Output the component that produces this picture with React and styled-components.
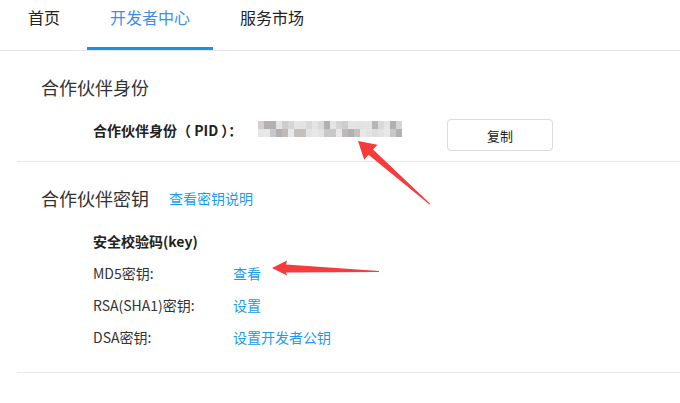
import React from "react";
import styled, { createGlobalStyle } from "styled-components";

const Global = createGlobalStyle`
  html, body { margin: 0; padding: 0; background: #fff; }
  body {
    font-family: "Noto Sans CJK SC", "Microsoft YaHei", "Liberation Sans", sans-serif;
    color: #333;
  }
`;

const Page = styled.div`
  position: relative;
  width: 680px;
  height: 403px;
  overflow: hidden;
  background: #fff;
`;

const Nav = styled.div`
  display: flex;
  gap: 4px;
  height: 50px;
  padding-left: 5px;
  border-bottom: 1px solid #e6e6e6;
`;

const Tab = styled.div`
  box-sizing: border-box;
  height: 50px;
  padding: 6px 23px 0;
  font-size: 16px;
  line-height: 22px;
  color: ${(p) => (p.$active ? "#3d8fe3" : "#222")};
  border-bottom: 3px solid ${(p) => (p.$active ? "#1e8fe6" : "transparent")};
`;

const Main = styled.div`
  padding-left: 17px;
`;

const Section = styled.section`
  padding: 24px 0 ${(p) => p.$pb}px 24px;
  border-bottom: 1px solid #e8e8e8;
`;

const TitleRow = styled.div`
  display: flex;
  align-items: center;
  gap: 20px;
  height: 24px;
`;

const Title = styled.h2`
  margin: 0;
  font-size: 18px;
  font-weight: normal;
  line-height: 24px;
  color: #333;
`;

const Link = styled.a`
  font-size: 14px;
  line-height: 20px;
  color: #1a9de8;
  text-decoration: none;
  cursor: pointer;
`;

const PidRow = styled.div`
  display: flex;
  align-items: flex-start;
  margin-top: 20px;
  padding-left: 52px;
`;

const PidLabel = styled.span`
  width: 165px;
  font-size: 14px;
  font-weight: bold;
  line-height: 22px;
  color: #222;
  white-space: pre;
`;

const Mosaic = styled.svg`
  display: block;
  margin-top: 2px;
  width: 144px;
  height: 16px;
`;

const CopyButton = styled.button`
  box-sizing: border-box;
  margin-left: 45px;
  width: 106px;
  height: 32px;
  border: 1px solid #dcdcdc;
  border-radius: 4px;
  background: #fff;
  font-family: inherit;
  font-size: 13px;
  color: #222;
  cursor: pointer;
`;

const KeyList = styled.div`
  display: flex;
  flex-direction: column;
  gap: 12px;
  margin-top: 21px;
  padding-left: 52px;
`;

const KeyRow = styled.div`
  display: flex;
  align-items: center;
  height: 20px;
  font-size: 14px;
  line-height: 20px;
`;

const SubHead = styled.div`
  font-size: 14px;
  font-weight: bold;
  line-height: 20px;
  color: #222;
`;

const KeyLabel = styled.span`
  width: 140px;
  color: #333;
`;

const Overlay = styled.svg`
  position: absolute;
  left: 0;
  top: 0;
  width: 680px;
  height: 403px;
  pointer-events: none;
`;

const palette = ["#d9d9d9", "#c8c8ca", "#bdbab8", "#e3e3e3", "#b6b6ba", "#d3d6d8", "#c4c0be", "#dedddb", "#b2b0b1", "#cfccc9"];

function PidMosaic() {
  const cells = [];
  for (let r = 0; r < 2; r++) {
    for (let c = 0; c < 24; c++) {
      const idx = (c * 7 + r * 3 + ((c * c) % 5)) % palette.length;
      let col = palette[idx];
      if (r === 0 && c % 3 === 0) col = "#e4e4e4";
      if (r === 1 && c % 4 === 1) col = "#e8e8e8";
      if (c === 0) col = r === 0 ? "#d2cfcd" : "#e6e6e6";
      cells.push(<rect key={r + "-" + c} x={c * 6} y={r * 8} width={6} height={8} fill={col} />);
    }
  }
  return (
    <Mosaic viewBox="0 0 144 16" aria-label="PID">
      {cells}
    </Mosaic>
  );
}

export default function App() {
  return (
    <Page>
      <Global />
      <Nav>
        <Tab>首页</Tab>
        <Tab $active>开发者中心</Tab>
        <Tab>服务市场</Tab>
      </Nav>
      <Main>
        <Section $pb={10}>
          <TitleRow>
            <Title>合作伙伴身份</Title>
          </TitleRow>
          <PidRow>
            <PidLabel>合作伙伴身份（ PID ）：</PidLabel>
            <PidMosaic />
            <CopyButton>复制</CopyButton>
          </PidRow>
        </Section>
        <Section $pb={25}>
          <TitleRow>
            <Title>合作伙伴密钥</Title>
            <Link>查看密钥说明</Link>
          </TitleRow>
          <KeyList>
            <SubHead>安全校验码(key)</SubHead>
            <KeyRow>
              <KeyLabel>MD5密钥:</KeyLabel>
              <Link>查看</Link>
            </KeyRow>
            <KeyRow>
              <KeyLabel>RSA(SHA1)密钥:</KeyLabel>
              <Link>设置</Link>
            </KeyRow>
            <KeyRow>
              <KeyLabel>DSA密钥:</KeyLabel>
              <Link>设置开发者公钥</Link>
            </KeyRow>
          </KeyList>
        </Section>
      </Main>
      <Overlay viewBox="0 0 680 403">
        <polygon
          fill="#f53b3b"
          points="358,141 377.4,144.7 373.1,149.6 430.5,204 429.5,204.6 368.5,154.8 364.2,159.7"
        />
        <polygon
          fill="#f53b3b"
          points="272,268 287,260.5 286,264.5 379,271 379,272 286,272.5 287,275.5"
        />
      </Overlay>
    </Page>
  );
}
